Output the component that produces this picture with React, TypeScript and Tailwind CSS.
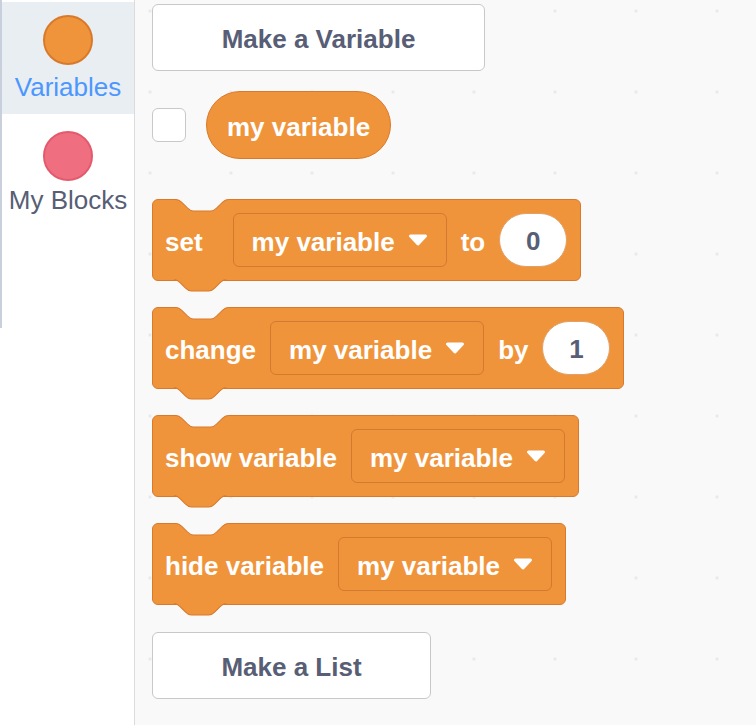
import { ReactNode } from "react";

const ORANGE = "#f0943b";
const EDGE = "#d9792b";
const WS_BG = "#f9f9f9";

// scratch notch, unscaled units (36 wide, 8 deep)
const NOTCH =
  "c 2,0 3,1 4,2 l 4,4 c 1,1 2,2 4,2 h 12 c 2,0 3,-1 4,-2 l 4,-4 c 1,-1 2,-2 4,-2";

function TopNotch() {
  return (
    <svg
      className="absolute top-[-1px] left-[23px] overflow-visible"
      width="54"
      height="14"
    >
      <g transform="translate(0 0.5) scale(1.45)">
        <path d={`M0,0 ${NOTCH} L36,-0.6 L0,-0.6 Z`} fill={WS_BG} />
        <path d={`M0,0 ${NOTCH}`} fill="none" stroke={EDGE} strokeWidth={0.7} />
      </g>
    </svg>
  );
}

function BottomTab() {
  return (
    <svg
      className="absolute top-full mt-[-1px] left-[21px] overflow-visible"
      width="54"
      height="14"
    >
      <g transform="translate(0 0.5) scale(1.45)">
        <path d={`M0,0 ${NOTCH} L36,-0.6 L0,-0.6 Z`} fill={ORANGE} />
        <path d={`M0,0 ${NOTCH}`} fill="none" stroke={EDGE} strokeWidth={0.7} />
      </g>
    </svg>
  );
}

function StackBlock({ children }: { children: ReactNode }) {
  return (
    <div className="relative flex items-center h-[82px] pl-[12px] pr-[13px] gap-[14px] bg-[#f0943b] border border-[#d9792b] rounded-[6px]">
      <TopNotch />
      {children}
      <BottomTab />
    </div>
  );
}

function Label({ children }: { children: ReactNode }) {
  return (
    <span className="pt-[3px] text-white font-bold text-[26px] leading-[30px]">{children}</span>
  );
}

function Caret() {
  return (
    <svg width="20" height="12" viewBox="0 0 20 12">
      <polygon
        points="2.5,2 17.5,2 10,10"
        fill="white"
        stroke="white"
        strokeWidth="3"
        strokeLinejoin="round"
      />
    </svg>
  );
}

function VarDropdown({ className = "" }: { className?: string }) {
  return (
    <div
      className={`flex items-center gap-[13px] h-[54px] pl-[18px] pr-[18px] border border-[#d27a2f] rounded-[6px] bg-[#f0943b] ${className}`}
    >
      <Label>my variable</Label>
      <Caret />
    </div>
  );
}

function NumberInput({ value }: { value: string }) {
  return (
    <div className="flex items-center justify-center w-[68px] h-[54px] pt-[3px] rounded-full bg-white border border-[#e0a066] text-[#575e75] font-bold text-[26px]">
      {value}
    </div>
  );
}

function PaletteButton({ label, width }: { label: string; width: string }) {
  return (
    <div
      className={`flex items-center justify-center h-[67px] pt-[3px] ${width} bg-white border border-[#c8c8c8] rounded-[6px] text-[#575e75] font-bold text-[26px]`}
    >
      {label}
    </div>
  );
}

function Sidebar() {
  return (
    <div className="flex w-[135px] shrink-0 bg-white border-r border-[#dcdcdc]">
      <div className="w-[2px] h-[328px] bg-[#c9d0dc]" />
      <div className="flex-1 pt-[2px]">
        <div className="flex flex-col items-center h-[112px] pt-[13px] bg-[#e9eef2]">
          <div className="w-[50px] h-[50px] rounded-full bg-[#f0943b] border-2 border-[#d87a2c]" />
          <span className="mt-[7px] text-[26px] leading-[30px] text-[#4c97ff]">Variables</span>
        </div>
        <div className="flex flex-col items-center pt-[17px]">
          <div className="w-[50px] h-[50px] rounded-full bg-[#ef6f80] border-2 border-[#e35a6d]" />
          <span className="mt-[4px] text-[26px] leading-[30px] text-[#575e75]">My Blocks</span>
        </div>
      </div>
    </div>
  );
}

export default function App() {
  return (
    <div
      className="flex w-[756px] h-[725px] overflow-hidden bg-white"
      style={{ fontFamily: '"Liberation Sans", Helvetica, Arial, sans-serif' }}
    >
      <Sidebar />
      <div className="flex-1 flex flex-col items-start pl-[17px] pt-[4px] bg-[#f9f9f9] bg-[radial-gradient(circle,#e6e6e6_1.3px,transparent_1.5px)] bg-[length:81px_81px] bg-[position:-25.5px_-29.5px]">
        <PaletteButton label="Make a Variable" width="w-[333px]" />

        <div className="flex items-center gap-[20px] mt-[20px]">
          <div className="w-[34px] h-[34px] bg-white border border-[#c8c8c8] rounded-[6px]" />
          <div className="flex items-center h-[68px] px-[20px] rounded-full bg-[#f0943b] border border-[#d9792b]">
            <Label>my variable</Label>
          </div>
        </div>

        <div className="mt-[40px]">
          <StackBlock>
            <Label>set</Label>
            <VarDropdown className="ml-[16px]" />
            <Label>to</Label>
            <NumberInput value="0" />
          </StackBlock>
        </div>

        <div className="mt-[26px]">
          <StackBlock>
            <Label>change</Label>
            <VarDropdown />
            <Label>by</Label>
            <NumberInput value="1" />
          </StackBlock>
        </div>

        <div className="mt-[26px]">
          <StackBlock>
            <Label>show variable</Label>
            <VarDropdown />
          </StackBlock>
        </div>

        <div className="mt-[26px]">
          <StackBlock>
            <Label>hide variable</Label>
            <VarDropdown />
          </StackBlock>
        </div>

        <div className="mt-[27px]">
          <PaletteButton label="Make a List" width="w-[279px]" />
        </div>
      </div>
    </div>
  );
}
